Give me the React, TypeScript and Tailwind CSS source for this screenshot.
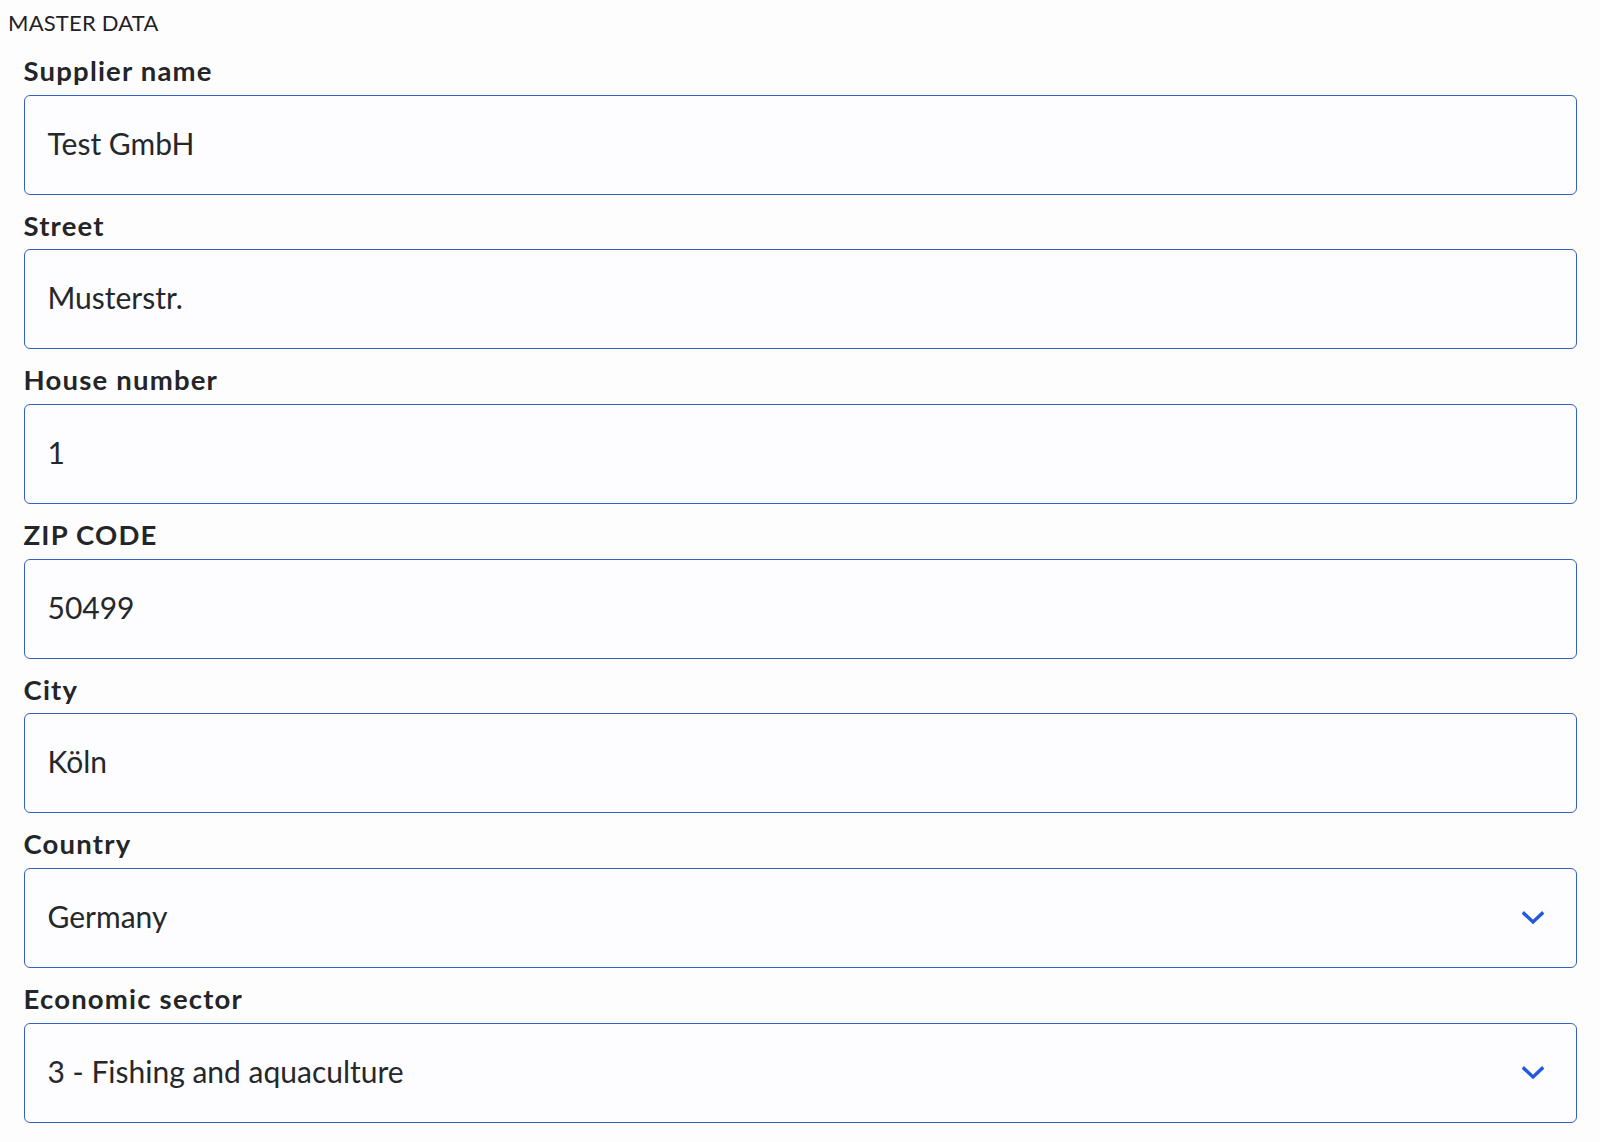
import React from "react";

type Field = { label: string; value: string; select?: boolean };

const fields: Field[] = [
  { label: "Supplier name", value: "Test GmbH" },
  { label: "Street", value: "Musterstr." },
  { label: "House number", value: "1" },
  { label: "ZIP CODE", value: "50499" },
  { label: "City", value: "Köln" },
  { label: "Country", value: "Germany", select: true },
  { label: "Economic sector", value: "3 - Fishing and aquaculture", select: true },
];

function Chevron() {
  return (
    <svg width="22" height="14" viewBox="0 0 22 14" fill="none" className="shrink-0">
      <polyline
        points="2,2.5 11,11 20,2.5"
        stroke="#2257e0"
        strokeWidth="3.4"
        strokeLinecap="square"
        strokeLinejoin="miter"
      />
    </svg>
  );
}

export default function App() {
  return (
    <div
      className="min-h-[1142px] w-[1600px] bg-[#fdfdfe] text-[#212529]"
      style={{ fontFamily: "Lato, 'Noto Sans', sans-serif" }}
    >
      <div className="pl-[8px] pt-[10px] text-[22px] leading-[26px] tracking-[0.2px] text-[#1f2226]">MASTER DATA</div>
      <div className="mt-[19px] flex flex-col gap-[15.2px] px-[23.5px]">
        {fields.map((f) => (
          <div key={f.label} className="flex flex-col">
            <label className="mb-[7.5px] text-[27.5px] font-bold leading-[32px] tracking-[1.2px] text-[#232528]">
              {f.label}
            </label>
            <div className="flex h-[100px] items-center justify-between rounded-[6px] border border-[#3461c1] bg-[#fdfcff] pl-[23px] pr-[32px]">
              <span className="pb-[4px] text-[30px] leading-[36px] text-[#25282b]">{f.value}</span>
              {f.select && <Chevron />}
            </div>
          </div>
        ))}
      </div>
    </div>
  );
}
